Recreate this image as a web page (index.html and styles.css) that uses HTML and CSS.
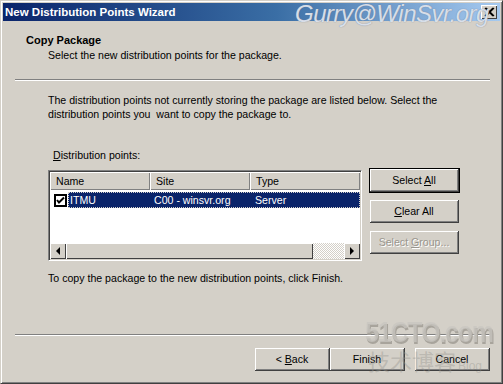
FILE: index.html
```html
<!DOCTYPE html>
<html lang="en">
<head>
    <meta charset="UTF-8">
    <title>New Distribution Points Wizard</title>
    <link rel="stylesheet" href="styles.css">
</head>
<body>

    <div class="window">
        <div class="titlebar">
            <span class="title">New Distribution Points Wizard</span>
            <span class="close">
                <svg width="14" height="12" viewBox="0 0 14 12">
                    <path d="M3 2 L11 10 M4 2 L12 10 M11 2 L3 10 M12 2 L4 10" stroke="#000" stroke-width="1.2" fill="none"/>
                </svg>
            </span>
        </div>

        <div class="header">
            <div class="header-title">Copy Package</div>
            <div class="header-sub">Select the new distribution points for the package.</div>
        </div>

        <div class="sep"></div>

        <div class="content">
            <p class="intro">The distribution points not currently storing the package are listed below. Select the<br>distribution points you&nbsp; want to copy the package to.</p>

            <div class="list-label"><u>D</u>istribution points:</div>

            <div class="list-row">
                <div class="listview">
                    <div class="lv-head">
                        <div class="lv-col col-name">Name</div>
                        <div class="lv-col col-site">Site</div>
                        <div class="lv-col col-type">Type</div>
                    </div>
                    <div class="lv-body">
                        <div class="lv-item">
                            <span class="check">
                                <svg width="13" height="13" viewBox="0 0 13 13">
                                    <rect x="0.5" y="0.5" width="12" height="12" fill="#fff" stroke="#000"/>
                                    <rect x="1.5" y="1.5" width="10" height="10" fill="none" stroke="#000"/>
                                    <path d="M3 6 L5 8.5 L10 3.5" stroke="#000" stroke-width="2" fill="none"/>
                                </svg>
                            </span>
                            <div class="lv-sel">
                                <span class="cell col-name">ITMU</span>
                                <span class="cell col-site">C00 - winsvr.org</span>
                                <span class="cell col-type">Server</span>
                            </div>
                        </div>
                    </div>
                    <div class="hscroll">
                        <div class="sb-btn">
                            <svg width="5" height="8" viewBox="0 0 5 8"><path d="M4 0 L0 4 L4 8 Z" fill="#000"/></svg>
                        </div>
                        <div class="sb-thumb"></div>
                        <div class="sb-track"></div>
                        <div class="sb-btn">
                            <svg width="5" height="8" viewBox="0 0 5 8"><path d="M0 0 L4 4 L0 8 Z" fill="#000"/></svg>
                        </div>
                    </div>
                </div>

                <div class="side-buttons">
                    <button class="btn default">Select <u>A</u>ll</button>
                    <button class="btn"><u>C</u>lear All</button>
                    <button class="btn disabled">Select <u>G</u>roup...</button>
                </div>
            </div>

            <p class="finish-note">To copy the package to the new distribution points, click Finish.</p>
        </div>

        <div class="sep"></div>

        <div class="footer">
            <button class="btn">&lt; <u>B</u>ack</button>
            <button class="btn">Finish</button>
            <button class="btn cancel">Cancel</button>
        </div>

        <!-- watermarks -->
        <div class="wm wm-top">Gurry@WinSvr.org</div>
        <div class="wm wm-51">51CTO.com</div>
        <div class="wm wm-blog">技术博客<span class="wm-small">Blog</span></div>
    </div>

</body>
</html>
```

FILE: styles.css
```css
body {
    margin: 0;
    padding: 0;
    background-color: #d4d0c8;
    font-family: "Liberation Sans", Arial, sans-serif;
    font-size: 10.6px;
    color: #000;
}

.window {
    position: relative;
    width: 503px;
    height: 384px;
    box-sizing: border-box;
    background-color: #d4d0c8;
    border-top: 1px solid #d4d0c8;
    border-left: 1px solid #d4d0c8;
    border-right: 1px solid #404040;
    border-bottom: 1px solid #404040;
    box-shadow: inset 1px 1px 0 #fff, inset -1px -1px 0 #808080;
    padding: 2px 2px 0 2px;
    overflow: hidden;
}

/* title bar */
.titlebar {
    height: 18px;
    display: flex;
    align-items: center;
    justify-content: space-between;
    padding: 0 3px 0 2px;
    background: linear-gradient(to right, #0a246a 0%, #3a6ea5 55%, #a6caf0 100%);
}

.title {
    color: #fff;
    font-family: "Liberation Sans", Arial, sans-serif;
    font-weight: bold;
    font-size: 11.5px;
}

.close {
    width: 16px;
    height: 14px;
    display: flex;
    align-items: center;
    justify-content: center;
    background-color: #d4d0c8;
    box-shadow: inset 1px 1px 0 #fff, inset -1px -1px 0 #404040;
}

/* header */
.header {
    height: 58px;
    box-sizing: border-box;
    padding-top: 13px;
}

.header-title {
    font-weight: bold;
    font-size: 11px;
    line-height: 13px;
    padding-left: 23px;
}

.header-sub {
    line-height: 14px;
    padding-left: 45px;
    margin-top: 1px;
}

.sep {
    height: 0;
    margin: 0 10px 0 12px;
    border-top: 1px solid #808080;
    border-bottom: 1px solid #fff;
}

/* page content */
.content {
    height: 253px;
    box-sizing: border-box;
    padding: 12px 0 0 45px;
}

.intro {
    margin: 0;
    line-height: 14px;
}

.list-label {
    margin: 28px 0 0 5px;
    line-height: 13px;
}

.list-row {
    display: flex;
    gap: 8px;
    margin-top: 8px;
}

.listview {
    width: 314px;
    height: 91px;
    box-sizing: border-box;
    background-color: #fff;
    border-top: 1px solid #808080;
    border-left: 1px solid #808080;
    border-right: 1px solid #fff;
    border-bottom: 1px solid #fff;
    box-shadow: inset 1px 1px 0 #404040, inset -1px -1px 0 #d4d0c8;
    padding: 1px;
    display: flex;
    flex-direction: column;
}

.lv-head {
    display: flex;
    height: 18px;
}

.lv-col {
    box-sizing: border-box;
    background-color: #d4d0c8;
    box-shadow: inset 1px 1px 0 #fff, inset -1px -1px 0 #808080;
    padding: 3px 0 0 6px;
    line-height: 13px;
}

.col-name { width: 100px; }
.col-site { width: 100px; }
.col-type { flex: 1; }

.lv-body {
    flex: 1;
    padding-top: 2px;
}

.lv-item {
    display: flex;
    align-items: center;
    height: 16px;
}

.check {
    width: 18px;
    padding-left: 4px;
    display: flex;
    align-items: center;
    box-sizing: border-box;
}

.lv-sel {
    flex: 1;
    display: flex;
    height: 16px;
    align-items: center;
    background-color: #0a246a;
    color: #fff;
    outline: 1px dotted #d4d0c8;
    outline-offset: -1px;
}

.cell {
    box-sizing: border-box;
    padding-left: 2px;
}

.lv-sel .col-name { width: 82px; }
.lv-sel .col-site { padding-left: 4px; }
.lv-sel .col-type { padding-left: 5px; }

/* horizontal scroll bar */
.hscroll {
    display: flex;
    height: 16px;
}

.sb-btn {
    width: 16px;
    display: flex;
    align-items: center;
    justify-content: center;
    background-color: #d4d0c8;
    box-shadow: inset 1px 1px 0 #fff, inset -1px -1px 0 #404040;
}

.sb-thumb {
    width: 247px;
    background-color: #d4d0c8;
    box-shadow: inset 1px 1px 0 #fff, inset -1px -1px 0 #404040;
}

.sb-track {
    flex: 1;
    background-color: #e6e4df;
    background-image: repeating-conic-gradient(#fff 0 25%, #d4d0c8 0 50%);
    background-size: 2px 2px;
}

/* buttons */
.btn {
    width: 89px;
    height: 23px;
    box-sizing: border-box;
    font-family: "Liberation Sans", Arial, sans-serif;
    font-size: 10.6px;
    color: #000;
    background-color: #d4d0c8;
    border: 0;
    border-right: 1px solid #404040;
    border-bottom: 1px solid #404040;
    box-shadow: inset 1px 1px 0 #fff, inset -1px -1px 0 #808080;
    padding: 0;
}

.btn.default {
    outline: 1px solid #000;
    outline-offset: 0;
}

.btn.disabled {
    color: #9a968e;
    text-shadow: 1px 1px 0 #fff;
}

.side-buttons {
    display: flex;
    flex-direction: column;
    gap: 8px;
    margin-top: -1px;
}

.finish-note {
    margin: 10px 0 0 0;
    line-height: 14px;
}

.footer {
    display: flex;
    padding: 12px 0 0 252px;
}

.footer .btn {
    width: 75px;
}

.footer .cancel {
    margin-left: 10px;
}

/* watermarks over the picture */
.wm {
    position: absolute;
    pointer-events: none;
    white-space: nowrap;
}

.wm-top {
    top: 0;
    left: 294px;
    font-family: "Liberation Sans", Arial, sans-serif;
    font-style: italic;
    font-size: 24px;
    line-height: 26px;
    color: rgba(235, 240, 248, 0.85);
    text-shadow: 0 0 1px #6a7890;
    letter-spacing: -0.5px;
}

.wm-51 {
    top: 315px;
    left: 364px;
    font-family: "Liberation Sans", Arial, sans-serif;
    font-weight: bold;
    font-size: 25px;
    line-height: 26px;
    letter-spacing: -1.2px;
    color: rgba(200, 198, 192, 0.75);
    text-shadow: 1px 1px 0 #a8a49c;
    transform: scaleY(1.2);
    transform-origin: top left;
}

.wm-blog {
    top: 346px;
    left: 367px;
    font-family: "Noto Sans CJK SC", sans-serif;
    font-size: 22px;
    line-height: 26px;
    color: rgba(150, 148, 142, 0.4);
}

.wm-small {
    font-family: "Liberation Sans", sans-serif;
    font-size: 12px;
    margin-left: 2px;
}
```
